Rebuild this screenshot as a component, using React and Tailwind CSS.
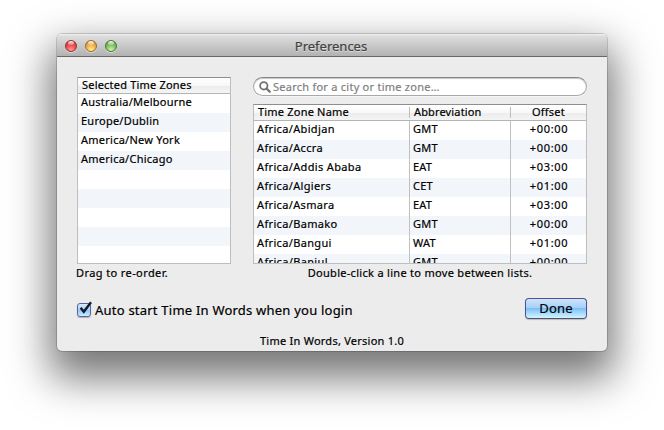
import React from "react";

const SELECTED = ["Australia/Melbourne", "Europe/Dublin", "America/New York", "America/Chicago", "", "", "", "", ""];

const ZONES = [
  ["Africa/Abidjan", "GMT", "+00:00"],
  ["Africa/Accra", "GMT", "+00:00"],
  ["Africa/Addis Ababa", "EAT", "+03:00"],
  ["Africa/Algiers", "CET", "+01:00"],
  ["Africa/Asmara", "EAT", "+03:00"],
  ["Africa/Bamako", "GMT", "+00:00"],
  ["Africa/Bangui", "WAT", "+01:00"],
  ["Africa/Banjul", "GMT", "+00:00"],
];

const HEADER =
  "flex h-[16px] shrink-0 border-b border-[#b4b4b4] bg-[linear-gradient(#ffffff_0%,#f8f8f8_50%,#ececec_51%,#f4f4f4_100%)] leading-[14px]";
const TABLE =
  "flex flex-col overflow-hidden border border-[#bebebe] border-t-[#8e8e8e] bg-white text-[11px] tracking-[0.25px]";

function Light({ className }) {
  return (
    <span className={"relative block size-[12px] overflow-hidden rounded-full border shadow-[0_1px_0_rgba(255,255,255,0.5)] " + className}>
      <span className="absolute top-[0px] left-[2px] h-[4px] w-[6px] rounded-full bg-[linear-gradient(rgba(255,255,255,0.9),rgba(255,255,255,0.25))]" />
    </span>
  );
}

function TitleBar() {
  return (
    <header className="grid h-[23px] shrink-0 grid-cols-[1fr_auto_1fr] items-center rounded-t-[4px] border-b border-[#686868] bg-[linear-gradient(#f2f2f2_0px,#dedede_2px,#b2b2b2_22px)]">
      <div className="flex gap-[8px] pt-[2px] pl-[8px]">
        <Light className="border-[#8e3434] bg-[radial-gradient(circle_at_50%_90%,#ffa0a0_0%,#ee5050_45%,#c03030_100%)]" />
        <Light className="border-[#9a6a2c] bg-[radial-gradient(circle_at_50%_90%,#fff09a_0%,#f0b850_45%,#c08028_100%)]" />
        <Light className="border-[#4c7638] bg-[radial-gradient(circle_at_50%_90%,#d6f7a6_0%,#86c765_45%,#4f913a_100%)]" />
      </div>
      <h1 className="pt-[2px] pr-[2px] text-[13px] leading-[20px] text-[#424242] [text-shadow:0_1px_0_rgba(255,255,255,0.5)]">Preferences</h1>
      <span />
    </header>
  );
}

function SelectedTable() {
  return (
    <div className={TABLE + " h-[187px]"}>
      <div className={HEADER + " pl-[4px] tracking-[0.2px]"}>Selected Time Zones</div>
      {SELECTED.map((z, i) => (
        <div key={i} className="h-[19px] shrink-0 pl-[3px] leading-[16px] even:bg-white odd:bg-[#f2f6fb]">
          {z}
        </div>
      ))}
    </div>
  );
}

function ZoneTable() {
  return (
    <div className={TABLE + " h-[160px]"}>
      <div className={HEADER}>
        <span className="w-[155px] pl-[4px] tracking-[0.2px]">Time Zone Name</span>
        <span className="my-[2px] w-px bg-[#bcbcbc]" />
        <span className="w-[100px] pl-[4px] tracking-[0.15px]">Abbreviation</span>
        <span className="my-[2px] w-px bg-[#bcbcbc]" />
        <span className="flex-1 text-center">Offset</span>
      </div>
      {ZONES.map(([name, abbr, offset]) => (
        <div key={name} className="flex h-[19px] shrink-0 leading-[16px] even:bg-white odd:bg-[#f2f6fb]">
          <span className="w-[156px] border-r border-[#c0c0c0] pl-[3px] tracking-[0.35px]">{name}</span>
          <span className="w-[101px] border-r border-[#c0c0c0] pl-[3px]">{abbr}</span>
          <span className="flex-1 pl-[1px] text-center tracking-[0.7px]">{offset}</span>
        </div>
      ))}
    </div>
  );
}

function SearchField() {
  return (
    <div className="flex h-[19px] shrink-0 items-center rounded-full border border-[#a9a9a9] border-t-[#858585] bg-white pl-[5px] shadow-[inset_0_1px_1px_rgba(0,0,0,0.22),0_1px_0_rgba(255,255,255,0.6)]">
      <svg viewBox="0 0 12 12" className="size-[12px]" fill="none" stroke="#737373">
        <circle cx="4.8" cy="4.8" r="3.7" strokeWidth="1.8" />
        <path d="M7.6 7.6 L10.8 10.8" strokeWidth="2.2" strokeLinecap="round" />
      </svg>
      <span className="pl-[2px] text-[11px] leading-[17px] tracking-[0.25px] text-[#7f7f7f]">Search for a city or time zone…</span>
    </div>
  );
}

function Checkbox() {
  return (
    <span className="relative block size-[14px] rounded-[3px] border border-[#5a62a0] bg-[linear-gradient(#d9eafb_0%,#a9d0f6_50%,#8ec4f5_51%,#c9eeff_100%)] shadow-[0_1px_1px_rgba(0,0,0,0.25)]">
      <svg viewBox="0 0 16 16" className="absolute -top-[3px] -left-[1px] size-[16px]" fill="none" stroke="#10182c">
        <path d="M3.6 6.8 L6.8 10.8 L14 1.2" strokeWidth="2.4" />
      </svg>
    </span>
  );
}

export default function App() {
  return (
    <main className="flex h-[430px] w-[664px] overflow-hidden bg-white pt-[34px] pl-[57px] font-['Noto_Sans','Open_Sans',sans-serif] whitespace-nowrap text-black [-webkit-text-stroke:0.2px]">
      <section className="flex h-[317px] w-[550px] flex-col rounded-[5px] bg-[#ececec] shadow-[0_0_0_1px_rgba(0,0,0,0.16),0_20px_42px_7px_rgba(0,0,0,0.54)]">
        <TitleBar />
        <div className="flex flex-1 flex-col px-[20px] pt-[20px]">
          <div className="flex gap-[22px]">
            <div className="w-[154px]">
              <SelectedTable />
              <p className="-ml-[1px] text-[11px] leading-[17px] tracking-[0.4px]">Drag to re-order.</p>
            </div>
            <div className="w-[334px]">
              <SearchField />
              <div className="h-[8px]" />
              <ZoneTable />
              <p className="text-center text-[11px] leading-[17px] tracking-[0.3px]">Double-click a line to move between lists.</p>
            </div>
          </div>
          <div className="flex items-start justify-between pt-[17px]">
            <label className="flex pt-[5px]">
              <Checkbox />
              <span className="pl-[4px] text-[13px] leading-[14px] tracking-[0.22px]">Auto start Time In Words when you login</span>
            </label>
            <button className="h-[21px] w-[62px] rounded-[4px] border border-[#51519b] border-b-[#50506e] bg-[linear-gradient(#cfe3fb_0%,#a4d0f8_48%,#7fbff6_50%,#a8dcfc_75%,#d0f4ff_100%)] pb-[1px] text-[13px] leading-[18px] tracking-[0.2px] shadow-[0_1px_1px_rgba(0,0,0,0.2)]">
              Done
            </button>
          </div>
          <p className="pt-[13px] text-center text-[11px] leading-[17px] tracking-[0.25px]">Time In Words, Version 1.0</p>
        </div>
      </section>
    </main>
  );
}
